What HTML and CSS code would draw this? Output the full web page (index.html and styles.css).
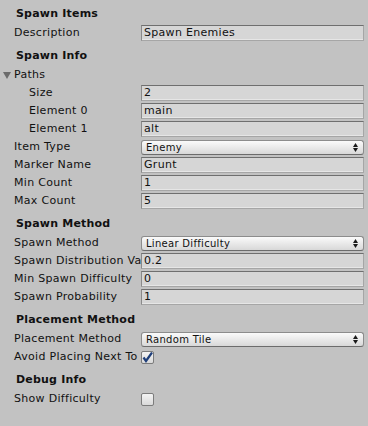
FILE: index.html
```html
<!DOCTYPE html>
<html>
<head>
<meta charset="utf-8">
<link rel="stylesheet" href="styles.css">
</head>
<body>
<div class="panel">
  <div class="header">Spawn Items</div>
  <div class="row"><span class="label">Description</span><span class="field">Spawn Enemies</span></div>

  <div class="header">Spawn Info</div>
  <div class="row"><span class="label foldout"><svg class="tri" width="8" height="7" viewBox="0 0 8 7"><path d="M0 0 H8 L4 7 Z" fill="#6b6b6b"/></svg>Paths</span></div>
  <div class="row"><span class="label indent">Size</span><span class="field">2</span></div>
  <div class="row"><span class="label indent">Element 0</span><span class="field">main</span></div>
  <div class="row"><span class="label indent">Element 1</span><span class="field">alt</span></div>
  <div class="row"><span class="label">Item Type</span><span class="popup"><span class="ptext">Enemy</span><svg class="arr" width="5" height="9" viewBox="0 0 5 9"><path d="M0 4 L2.5 0 L5 4 Z M0 5 L2.5 9 L5 5 Z" fill="#1a1a1a"/></svg></span></div>
  <div class="row"><span class="label">Marker Name</span><span class="field">Grunt</span></div>
  <div class="row"><span class="label">Min Count</span><span class="field">1</span></div>
  <div class="row"><span class="label">Max Count</span><span class="field">5</span></div>

  <div class="header">Spawn Method</div>
  <div class="row"><span class="label">Spawn Method</span><span class="popup"><span class="ptext">Linear Difficulty</span><svg class="arr" width="5" height="9" viewBox="0 0 5 9"><path d="M0 4 L2.5 0 L5 4 Z M0 5 L2.5 9 L5 5 Z" fill="#1a1a1a"/></svg></span></div>
  <div class="row"><span class="label">Spawn Distribution Va</span><span class="field">0.2</span></div>
  <div class="row"><span class="label">Min Spawn Difficulty</span><span class="field">0</span></div>
  <div class="row"><span class="label">Spawn Probability</span><span class="field">1</span></div>

  <div class="header">Placement Method</div>
  <div class="row"><span class="label">Placement Method</span><span class="popup"><span class="ptext">Random Tile</span><svg class="arr" width="5" height="9" viewBox="0 0 5 9"><path d="M0 4 L2.5 0 L5 4 Z M0 5 L2.5 9 L5 5 Z" fill="#1a1a1a"/></svg></span></div>
  <div class="row"><span class="label">Avoid Placing Next To</span><span class="check"><svg width="11" height="11" viewBox="0 0 11 11"><path d="M1.5 5.5 L4 9 L10 0.5" fill="none" stroke="#1f3f7a" stroke-width="2.2"/></svg></span></div>

  <div class="header">Debug Info</div>
  <div class="row"><span class="label">Show Difficulty</span><span class="check"></span></div>
</div>
</body>
</html>
```
FILE: styles.css
```css
html, body {
  margin: 0;
  padding: 0;
  background: #c2c2c2;
}
.panel {
  width: 368px;
  height: 426px;
  font-family: "DejaVu Sans", Verdana, sans-serif;
  font-size: 11px;
  color: #111;
  display: flex;
  flex-direction: column;
}
.header {
  height: 24px;
  line-height: 27px;
  padding-left: 16px;
  font-weight: bold;
  letter-spacing: 0.2px;
  box-sizing: border-box;
}
.row {
  height: 18px;
  display: flex;
  align-items: center;
  padding-right: 4px;
}
.label {
  width: 141px;
  flex: none;
  padding-left: 14px;
  box-sizing: border-box;
  white-space: nowrap;
  overflow: hidden;
  line-height: 18px;
  letter-spacing: 0.3px;
}
.label.indent {
  padding-left: 29px;
}
.label.foldout {
  position: relative;
  padding-left: 14px;
}
.tri {
  position: absolute;
  left: 3px;
  top: 6px;
}
.field {
  flex: 1;
  height: 16px;
  box-sizing: border-box;
  background: #d6d6d6;
  border: 1px solid #a6a6a6;
  border-top-color: #6f6f6f;
  border-left-color: #8a8a8a;
  box-shadow: inset 0 -1px 0 #e6e6e6;
  padding-left: 2px;
  line-height: 14px;
  letter-spacing: 0.3px;
  white-space: nowrap;
  overflow: hidden;
}
.popup {
  flex: 1;
  height: 15px;
  box-sizing: border-box;
  border: 1px solid #8c8c8c;
  border-bottom-color: #6c6c6c;
  border-radius: 3px;
  background: linear-gradient(#fafafa, #e6e6e6 60%, #d8d8d8);
  display: flex;
  align-items: center;
  padding-left: 4px;
  padding-right: 5px;
  font-size: 10px;
  letter-spacing: 0.3px;
}
.ptext {
  flex: 1;
  line-height: 13px;
}
.arr {
  flex: none;
}
.check {
  width: 13px;
  height: 13px;
  box-sizing: border-box;
  border: 1px solid #7c7c7c;
  border-radius: 2px;
  background: linear-gradient(#f4f4f4, #d9d9d9);
  display: flex;
  align-items: center;
  justify-content: center;
}
```
